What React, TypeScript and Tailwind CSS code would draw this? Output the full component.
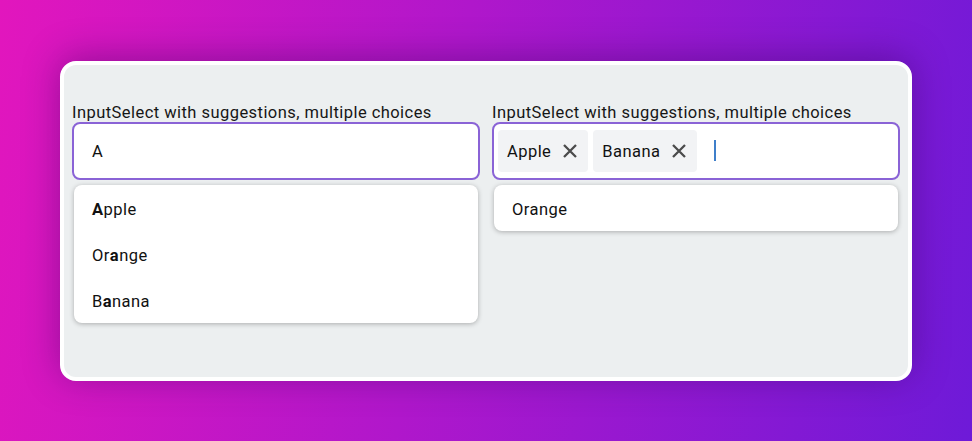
import React from "react";

const font = { fontFamily: "Roboto, 'Noto Sans', sans-serif" };

function CloseIcon() {
  return (
    <svg width="14" height="14" viewBox="0 0 14 14" className="shrink-0">
      <path d="M1 1 L13 13 M13 1 L1 13" stroke="#4b4b4b" strokeWidth="2.3" fill="none" />
    </svg>
  );
}

function Chip({ label }: { label: string }) {
  return (
    <div className="flex h-[42px] items-center gap-[12px] rounded-[4px] bg-[#f2f3f5] pl-[9px] pr-[11px] text-[16.5px] tracking-[0.45px] text-[#111]">
      <span className="pt-[4px]">{label}</span>
      <CloseIcon />
    </div>
  );
}

function Option({ children }: { children: React.ReactNode }) {
  return (
    <div className="flex h-[46px] items-center pl-[18px] pt-[5px] text-[16.5px] tracking-[0.45px] text-[#111]">
      {children}
    </div>
  );
}

function Label() {
  return (
    <div className="h-[19px] text-[16.5px] leading-[19px] tracking-[0.45px] text-[#161616]">
      InputSelect with suggestions, multiple choices
    </div>
  );
}

export default function App() {
  return (
    <div
      className="flex h-[441px] w-[972px] items-center justify-center bg-[linear-gradient(100deg,#e216bd_0%,#b017cb_45%,#6e1ad8_100%)]"
      style={font}
    >
      <div className="w-[852px] rounded-[16px] border-4 border-white bg-[#eceff0] px-2 pt-[38px] pb-[54px] shadow-[0_-4px_36px_rgba(50,0,90,0.4)]">
        <div className="grid grid-cols-2 gap-3">
          <div className="flex flex-col">
            <Label />
            <div className="flex h-[58px] items-center rounded-[8px] border-2 border-[#8a63d6] bg-white pl-[18px] pt-[4px] text-[16.5px] text-[#111]">
              A
            </div>
            <div className="mx-0.5 mt-[5px] rounded-[8px] bg-white shadow-[0_1px_5px_rgba(0,0,0,0.28)]">
              <Option>
                <b>A</b>pple
              </Option>
              <Option>
                Or<b>a</b>nge
              </Option>
              <Option>
                B<b>a</b>nana
              </Option>
            </div>
          </div>
          <div className="flex flex-col">
            <Label />
            <div className="flex h-[58px] items-center gap-[5px] rounded-[8px] border-2 border-[#8a63d6] bg-white pl-1">
              <Chip label="Apple" />
              <Chip label="Banana" />
              <div className="ml-[12px] h-[21px] w-[2px] bg-[#3f7fca]" />
            </div>
            <div className="mx-0.5 mt-[5px] rounded-[8px] bg-white shadow-[0_1px_5px_rgba(0,0,0,0.28)]">
              <Option>Orange</Option>
            </div>
          </div>
        </div>
      </div>
    </div>
  );
}
